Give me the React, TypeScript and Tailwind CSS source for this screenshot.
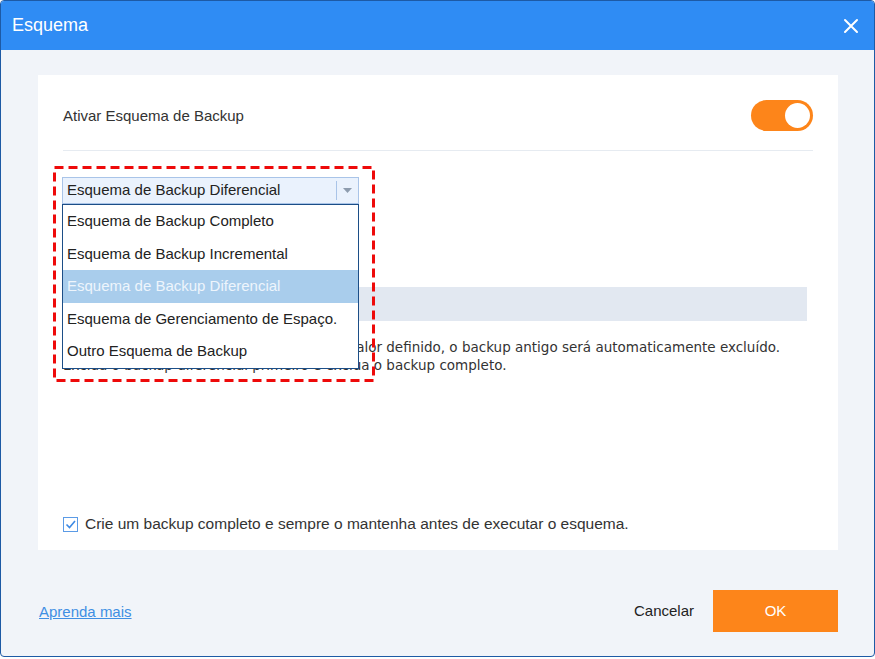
import React from 'react';

const items = [
  'Esquema de Backup Completo',
  'Esquema de Backup Incremental',
  'Esquema de Backup Diferencial',
  'Esquema de Gerenciamento de Espaço.',
  'Outro Esquema de Backup',
];

const App = () => {
  return (
    <div className="w-[875px] h-[659px] bg-white font-['Liberation_Sans',Arial,sans-serif]">
      <div className="w-[875px] h-[657px] flex flex-col rounded-[4px] border border-[#1d5aa5] overflow-hidden bg-[#f1f4f9]">
        {/* title bar */}
        <div className="h-[49px] shrink-0 bg-[#2f8cf4] flex items-center justify-between pl-[11px] pr-[15px]">
          <span className="text-white text-[18px]">Esquema</span>
          <svg width="16" height="16" viewBox="0 0 16 16" className="text-white">
            <path d="M2 2 L14 14 M14 2 L2 14" stroke="currentColor" strokeWidth="2" strokeLinecap="round" />
          </svg>
        </div>

        {/* content panel */}
        <div className="pt-[25px] pl-[37px] pr-[36px]">
          <div className="relative h-[475px] bg-white px-[25px] flex flex-col text-[#333] text-[15px]">
            <div className="flex items-center justify-between pt-[25px] pb-[19px] border-b border-[#e6ebf1]">
              <span className="leading-[31px]">Ativar Esquema de Backup</span>
              <div className="w-[62px] h-[31px] rounded-full bg-[#fd851a] flex items-center justify-end pr-[3px]">
                <div className="w-[25px] h-[25px] rounded-full bg-white" />
              </div>
            </div>

            <div className="relative z-10 mt-[26px] -ml-px w-[297px] h-[27px] border border-[#a9c4e8] bg-[#eaf2fd] flex items-center">
              <span className="pl-[4px] flex-1 text-[#222]">Esquema de Backup Diferencial</span>
              <div className="w-px h-[19px] bg-[#a9c4e8]" />
              <div className="w-[21px] flex justify-center">
                <svg width="9" height="5" viewBox="0 0 9 5">
                  <path d="M0 0 H9 L4.5 5 Z" fill="#8d9cae" />
                </svg>
              </div>
              <div className="absolute left-[-1px] top-[26px] w-[297px] h-[165px] border border-[#1c4e87] bg-white flex flex-col">
                {items.map((t, i) => (
                  <div
                    key={t}
                    className={
                      i === 2
                        ? 'flex-1 flex items-center pl-[4px] bg-[#a9cdec] text-[#eef5fc]'
                        : 'flex-1 flex items-center pl-[4px] text-[#222]'
                    }
                  >
                    {t}
                  </div>
                ))}
              </div>
            </div>

            <div className="mt-[83px] mr-[6px] h-[34px] bg-[#e2e8f1]" />

            <div className="mt-[17px] text-[13.5px] leading-[18px] text-[#333] font-['DejaVu_Sans',Verdana,sans-serif] whitespace-nowrap">
              <div>Quando o número dos backups exceder o valor definido, o backup antigo será automaticamente excluído.</div>
              <div>Exclua o backup diferencial primeiro e exclua o backup completo.</div>
            </div>

            <div className="mt-auto pb-[17px] flex items-center gap-[7px]">
              <svg width="15" height="15" viewBox="0 0 15 15">
                <rect x="0.5" y="0.5" width="14" height="14" fill="white" stroke="#5b9be6" />
                <path d="M3.5 7.5 L6.5 10.5 L12 4" fill="none" stroke="#3d8ae5" strokeWidth="1.6" />
              </svg>
              <span className="leading-[18px] text-[15.5px]">Crie um backup completo e sempre o mantenha antes de executar o esquema.</span>
            </div>

            <svg className="absolute left-[15px] top-[91px] z-20 pointer-events-none" width="322" height="216" viewBox="0 0 322 216">
              <rect x="1.5" y="1.5" width="319" height="213" fill="none" stroke="#ee0a0a" strokeWidth="3" strokeDasharray="9 5" />
            </svg>
          </div>
        </div>

        {/* footer */}
        <div className="flex-1 flex items-start justify-between pt-[40px] pl-[38px] pr-[36px]">
          <a className="mt-[11px] text-[15px] text-[#3f8fe3] underline">Aprenda mais</a>
          <div className="flex items-center gap-[19px]">
            <span className="text-[15px] text-[#222]">Cancelar</span>
            <button className="w-[125px] h-[42px] bg-[#fd851a] text-white text-[15px]">OK</button>
          </div>
        </div>
      </div>
    </div>
  );
};

export default App;
